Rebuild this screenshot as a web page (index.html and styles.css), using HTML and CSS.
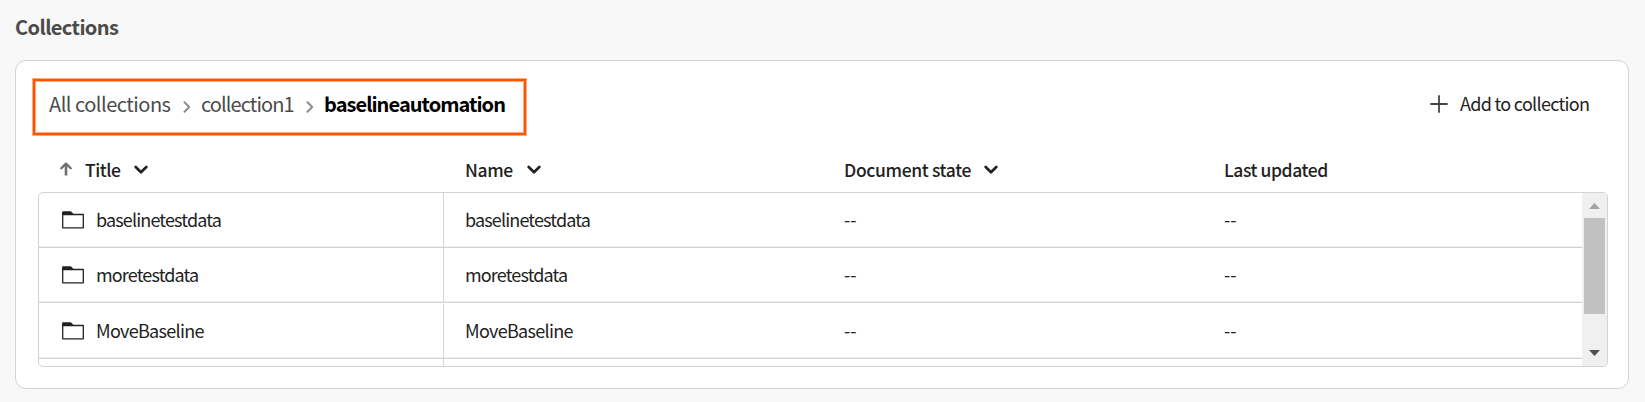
FILE: index.html
```html
<!DOCTYPE html>
<html lang="en">
<head>
<meta charset="utf-8">
<title>Collections</title>
<link rel="stylesheet" href="styles.css">
</head>
<body>
<svg class="defs" width="0" height="0" aria-hidden="true">
  <symbol id="chevron-down" viewBox="0 0 14 10"><path d="M1.700 2 7 7.200 12.300 2" fill="none" stroke="#222" stroke-width="2.700" stroke-linecap="round" stroke-linejoin="round"/></symbol>
  <symbol id="chevron-right" viewBox="0 0 8 12"><path d="M1.500 1.300 6.200 6 1.500 10.700" fill="none" stroke="#8e8e8e" stroke-width="2" stroke-linecap="round" stroke-linejoin="round"/></symbol>
  <symbol id="folder" viewBox="0 0 22 18"><path d="M0 4V1.500Q0 .2 1.400.2H8.200q.9 0 1.500.7L11.500 3V4Z" fill="#222"/><path d="M.7 3.500H21.300V16.800H.7Z" fill="none" stroke="#222" stroke-width="1.300" stroke-linejoin="round"/></symbol>
</svg>
<h1 class="page-title">Collections</h1>
<section class="panel">
  <header class="toolbar">
    <nav class="breadcrumbs">
      <a class="crumb crumb-root">All collections</a>
      <svg class="crumb-sep"><use href="#chevron-right"/></svg>
      <a class="crumb crumb-parent">collection1</a>
      <svg class="crumb-sep"><use href="#chevron-right"/></svg>
      <strong class="crumb crumb-current">baselineautomation</strong>
    </nav>
    <button class="add-button">
      <svg class="plus" viewBox="0 0 18 18"><path d="M9 1v16M1 9h16" stroke="#444" stroke-width="1.800" stroke-linecap="round"/></svg>
      <span>Add to collection</span>
    </button>
  </header>
  <div class="table-head">
    <div class="head-cell head-title">
      <svg class="sort" viewBox="0 0 12 14"><path d="M6 13.500V3" stroke="#6e6e6e" stroke-width="2.600"/><path d="M1.300 6.300 6 1.600 10.700 6.300" fill="none" stroke="#6e6e6e" stroke-width="2.300" stroke-linecap="round" stroke-linejoin="round"/></svg>
      <span class="h-title">Title</span><svg class="caret"><use href="#chevron-down"/></svg>
    </div>
    <div class="head-cell"><span class="h-name">Name</span><svg class="caret"><use href="#chevron-down"/></svg></div>
    <div class="head-cell"><span class="h-state">Document state</span><svg class="caret"><use href="#chevron-down"/></svg></div>
    <div class="head-cell"><span class="h-updated">Last updated</span></div>
  </div>
  <div class="table">
    <div class="rows">
      <div class="row">
        <div class="cell cell-title"><svg class="folder"><use href="#folder"/></svg><span>baselinetestdata</span></div>
        <div class="cell"><span>baselinetestdata</span></div><div class="cell dash"><span>--</span></div><div class="cell dash"><span>--</span></div>
      </div>
      <div class="row">
        <div class="cell cell-title"><svg class="folder"><use href="#folder"/></svg><span>moretestdata</span></div>
        <div class="cell"><span>moretestdata</span></div><div class="cell dash"><span>--</span></div><div class="cell dash"><span>--</span></div>
      </div>
      <div class="row row-tall">
        <div class="cell cell-title"><svg class="folder"><use href="#folder"/></svg><span class="mixed">MoveBaseline</span></div>
        <div class="cell"><span class="mixed">MoveBaseline</span></div><div class="cell dash"><span>--</span></div><div class="cell dash"><span>--</span></div>
      </div>
      <div class="row row-cut"><div class="cell cell-title"></div></div>
    </div>
    <div class="scrollbar">
      <svg class="arrow" viewBox="0 0 11 6"><path d="M5.500 0 11 6H0Z" fill="#a3a3a3"/></svg>
      <div class="thumb"></div>
      <svg class="arrow arrow-down" viewBox="0 0 11 6"><path d="M0 0H11L5.500 6Z" fill="#505050"/></svg>
    </div>
  </div>
</section>
</body>
</html>
```
FILE: styles.css
```css
* { box-sizing: border-box; }
body {
  margin: 0;
  height: 402px;
  padding: 0 16px 0 15px;
  background: #f8f8f8;
  color: #222;
  font-family: "Noto Sans CJK SC", "Noto Sans", sans-serif;
  font-size: 18px;
  overflow: hidden;
}
.defs { display: block; height: 0; }
svg { flex: none; }
.page-title {
  margin: 0;
  height: 60px;
  padding-top: 12px;
  font-size: 20px;
  line-height: 30px;
  font-weight: 700;
  letter-spacing: -0.6px;
  color: #4b4b4b;
}
.panel {
  width: 1614px;
  height: 329px;
  padding: 17px 20px 0 16px;
  border: 1px solid #d3d3d3;
  border-radius: 11px;
  background: #fff;
}
.toolbar { display: flex; justify-content: space-between; height: 58px; }
.breadcrumbs {
  display: flex;
  align-items: center;
  width: 493px;
  height: 56px;
  margin: 1px 0 0 1px;
  padding: 0 0 7px 14px;
  border: 2px solid #ff5500;
  box-shadow: 0 0 0 1px #ffaa80, inset 0 0 0 1px #ffaa80;
  font-size: 20px;
  line-height: 30px;
  white-space: nowrap;
}
.crumb { color: #4b4b4b; }
.crumb-root { width: 122px; letter-spacing: -0.5px; }
.crumb-parent { width: 93px; letter-spacing: -0.9px; }
.crumb-current { color: #000; font-weight: 700; letter-spacing: -0.95px; }
.crumb-sep { width: 8px; height: 12px; margin: 7px 10px 0 12px; }
.add-button {
  display: flex;
  align-items: center;
  gap: 12px;
  height: 52px;
  width: 180px;
  padding: 0;
  margin-right: -2px;
  border: 0;
  background: none;
  color: #222;
  font: inherit;
  letter-spacing: -0.7px;
  white-space: nowrap;
}
.add-button span { margin-top: -2px; }
.plus { width: 18px; height: 18px; }
.table-head {
  display: grid;
  grid-template-columns: 427px 379px 380px 1fr;
  height: 56px;
  padding-top: 19px;
  font-weight: 500;
  font-size: 17.500px;
  line-height: 30px;
}
.head-cell { display: flex; align-items: center; height: 30px; padding-left: 6px; white-space: nowrap; }
.head-title { padding-left: 28px; }
.h-title { width: 37px; letter-spacing: -0.500px; }
.h-name { width: 50px; letter-spacing: -0.350px; }
.h-state { width: 128px; letter-spacing: -0.350px; }
.h-updated { letter-spacing: -0.430px; }
.sort { width: 12px; height: 14px; margin: 0 13px 2px 0; }
.caret { width: 14px; height: 10px; margin-left: 12px; }
.table {
  display: flex;
  width: 1570px;
  height: 175px;
  margin-left: 6px;
  border: 1px solid #d3d3d3;
  border-radius: 5px;
  overflow: hidden;
}
.rows { width: 1543px; }
.row {
  display: grid;
  grid-template-columns: 405px 400px 380px 1fr;
  height: 55px;
  border-bottom: 1px solid #d3d3d3;
  box-shadow: inset 0 -1px #efefef;
}
.row-tall { height: 56px; padding-top: 1px; }
.row-cut { height: 8px; border: 0; box-shadow: none; }
.cell { display: flex; align-items: center; padding-left: 21px; line-height: 30px; letter-spacing: -0.86px; white-space: nowrap; }
.cell span { margin-top: -2px; }
.mixed { letter-spacing: -0.7px; }
.cell-title { border-right: 1px solid #d3d3d3; padding-left: 23px; gap: 12px; }
.row .dash { padding-left: 0; letter-spacing: 0; }
.folder { width: 22px; height: 18px; }
.scrollbar { display: flex; flex-direction: column; align-items: center; width: 25px; background: #f0f0f0; }
.arrow { width: 11px; height: 6px; margin: 10px 0 9px; }
.arrow-down { margin: 36px 0 0; }
.thumb { width: 21px; height: 96px; background: #c1c1c1; }
```
